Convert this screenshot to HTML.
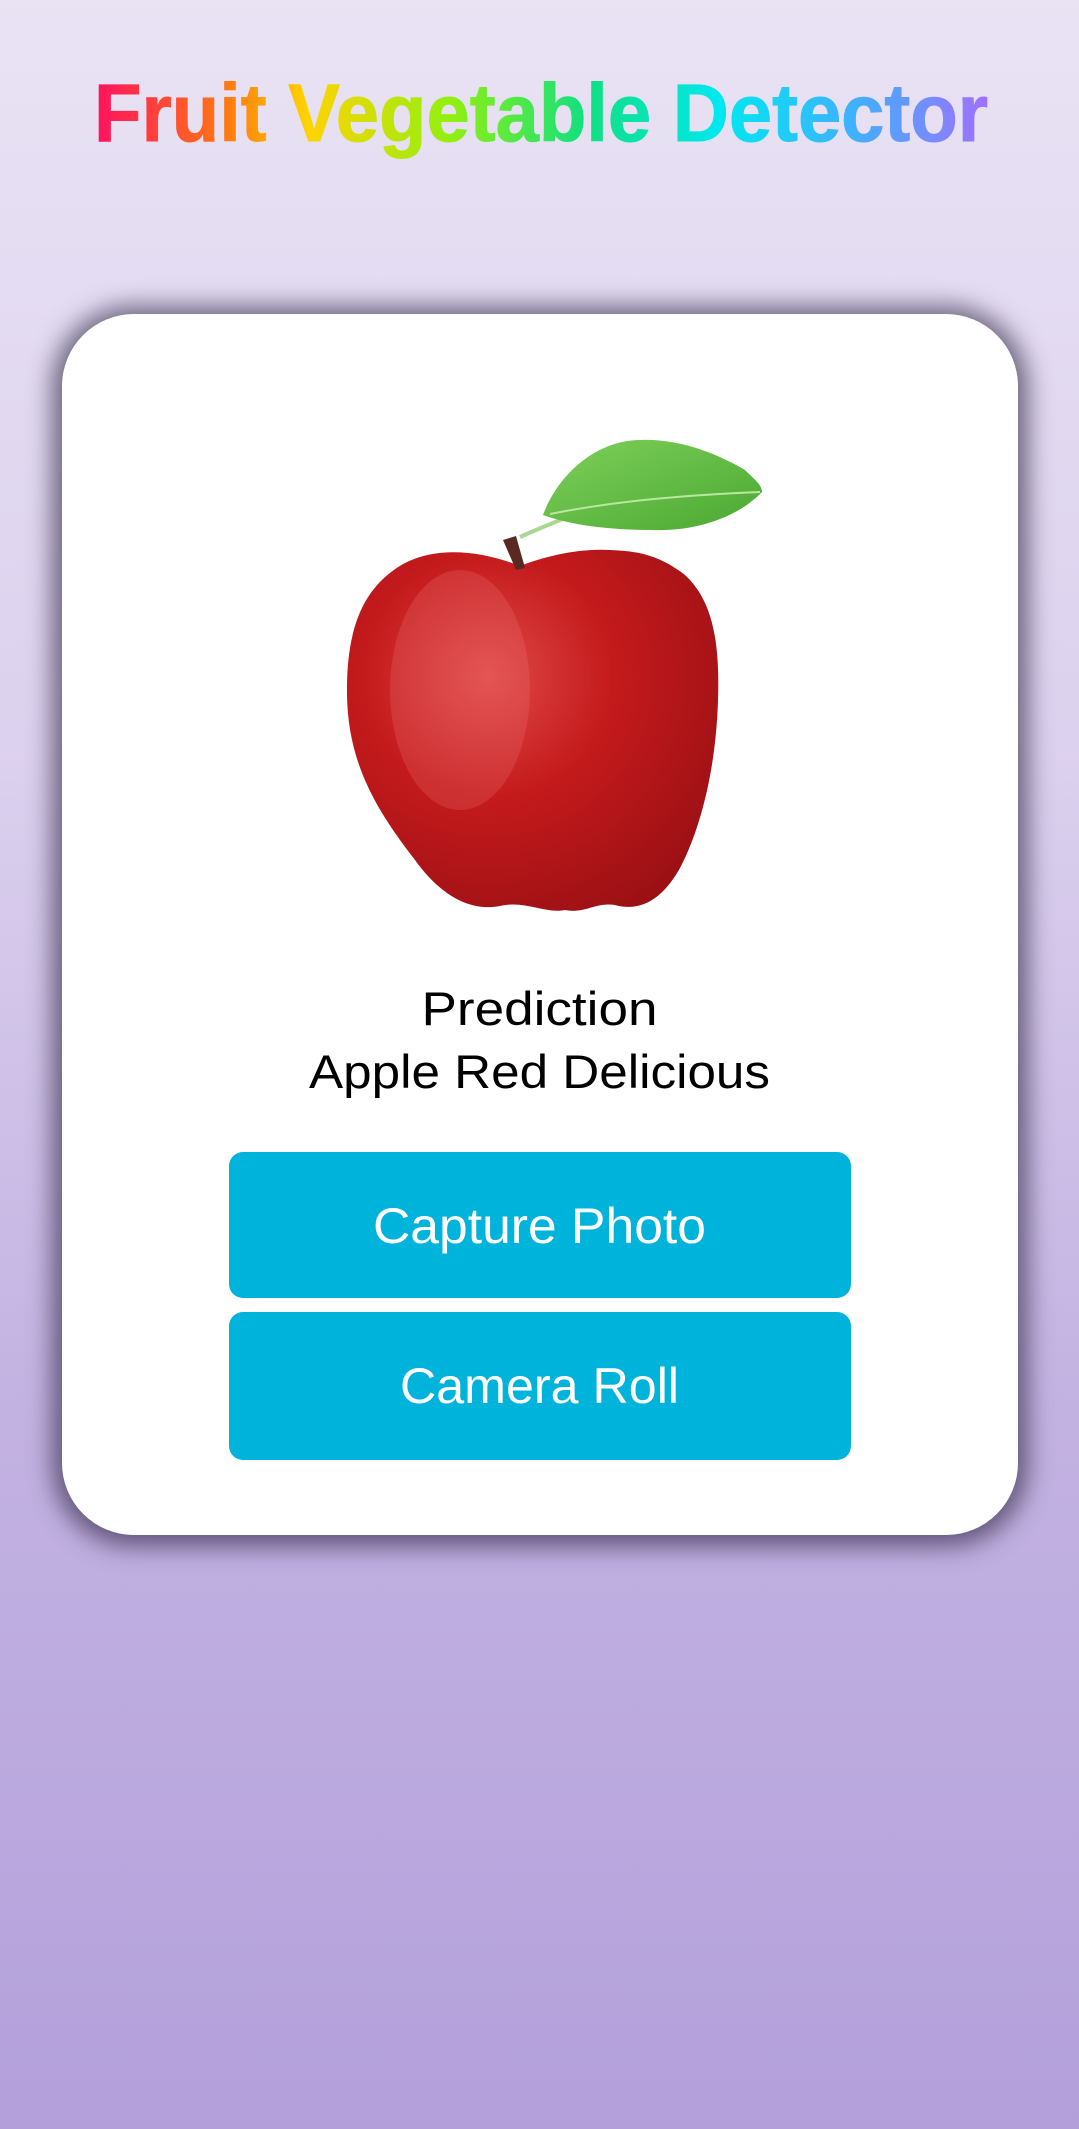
<!DOCTYPE html>
<html><head><meta charset="utf-8"><style>
html,body{margin:0;padding:0}
body{width:1079px;height:2129px;overflow:hidden;background:linear-gradient(#e9e3f4 0%,#dcd1ee 35%,#c3b3e2 65%,#b3a0db 100%);position:relative;font-family:"Liberation Sans",sans-serif}
.card{position:absolute;left:62px;top:314px;width:956px;height:1221px;background:#fff;border-radius:72px;box-shadow:0 2px 24px 10px rgba(60,50,80,.7)}
.btn{position:absolute;left:229px;width:622px;background:#00b3da;border-radius:14px}
svg{position:absolute;left:0;top:0}
</style></head><body>
<div class="card"></div>
<div class="btn" style="top:1152px;height:146px"></div>
<div class="btn" style="top:1312px;height:148px"></div>
<svg width="1079" height="2129" viewBox="0 0 1079 2129">
<defs>
<linearGradient id="tg" x1="94" y1="0" x2="988" y2="0" gradientUnits="userSpaceOnUse">
<stop offset="0" stop-color="#ff1060"/><stop offset="0.15" stop-color="#ff7a10"/><stop offset="0.24" stop-color="#ffd400"/><stop offset="0.4" stop-color="#90f010"/><stop offset="0.55" stop-color="#10e080"/><stop offset="0.7" stop-color="#00e8f0"/><stop offset="0.85" stop-color="#40b0ff"/><stop offset="1" stop-color="#a070ff"/>
</linearGradient>
<radialGradient id="ag" cx="0.38" cy="0.35" r="0.75">
<stop offset="0" stop-color="#e04a48"/><stop offset="0.45" stop-color="#c41a1c"/><stop offset="1" stop-color="#9a1014"/>
</radialGradient>
<linearGradient id="lg" x1="0" y1="0" x2="1" y2="1"><stop offset="0" stop-color="#7ed05a"/><stop offset="1" stop-color="#4aa832"/></linearGradient>
</defs>
<text x="94" y="141" textLength="894" lengthAdjust="spacingAndGlyphs" font-family="Liberation Sans" font-weight="bold" font-size="82" fill="url(#tg)" stroke="url(#tg)" stroke-width="1">Fruit Vegetable Detector</text>
<path d="M520,566 C545,556 580,548 610,550 C640,551 660,556 685,575 C712,600 720,640 718,700 C716,770 700,830 680,868 C662,900 640,912 615,905 C595,902 585,914 565,910 C545,914 525,900 500,906 C470,912 440,895 415,860 C378,812 348,765 347,695 C346,625 365,585 405,563 C440,545 485,552 520,566 Z" fill="url(#ag)"/>
<ellipse cx="460" cy="690" rx="70" ry="120" fill="#f08080" opacity="0.22"/>
<path d="M503,540 L516,536 L525,568 L516,570 Z" fill="#5a2a22"/>
<path d="M520,537 C540,528 560,520 580,512" stroke="#a8d890" stroke-width="4" fill="none"/>
<path d="M543,515 C560,470 600,440 640,440 C680,438 720,455 745,470 C755,480 762,485 762,492 C740,515 700,532 650,530 C610,530 570,525 543,515 Z" fill="url(#lg)"/>
<path d="M550,514 C620,500 690,495 760,492" stroke="#b8e8a0" stroke-width="2" fill="none"/>
<text x="539.5" y="1025" text-anchor="middle" font-family="Liberation Sans" font-size="47" fill="#000" textLength="236" lengthAdjust="spacingAndGlyphs">Prediction</text>
<text x="539.5" y="1088" text-anchor="middle" font-family="Liberation Sans" font-size="47" fill="#000" textLength="461" lengthAdjust="spacingAndGlyphs">Apple Red Delicious</text>
<text x="539.5" y="1243" text-anchor="middle" font-family="Liberation Sans" font-size="50" fill="#fff" textLength="333" lengthAdjust="spacingAndGlyphs">Capture Photo</text>
<text x="539.5" y="1403" text-anchor="middle" font-family="Liberation Sans" font-size="50" fill="#fff" textLength="279" lengthAdjust="spacingAndGlyphs">Camera Roll</text>
</svg>
</body></html>
